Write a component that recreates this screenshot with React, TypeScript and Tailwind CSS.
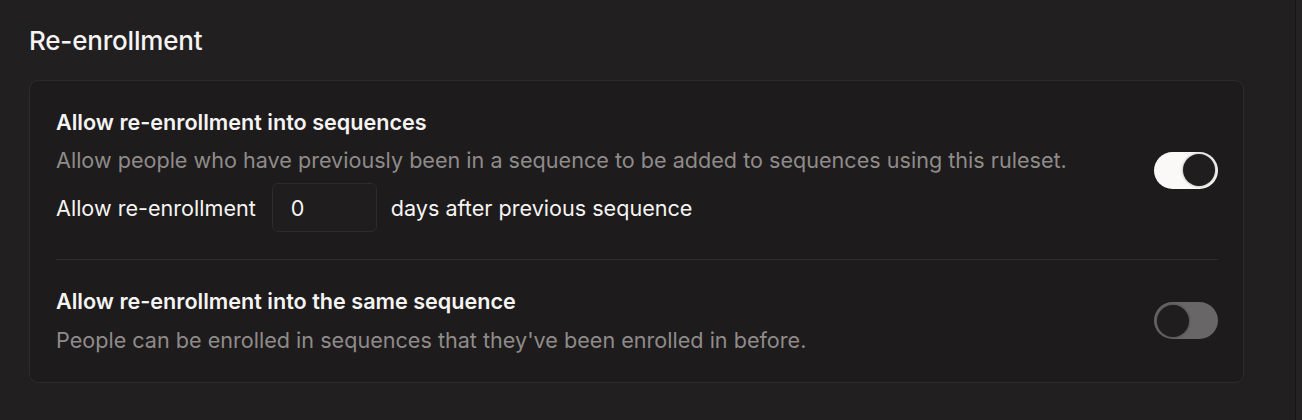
import React, { useState } from "react";

function Toggle({ on, onChange }: { on: boolean; onChange: () => void }) {
  return (
    <button
      type="button"
      role="switch"
      aria-checked={on}
      onClick={onChange}
      className={
        "relative flex h-[37px] w-[64px] shrink-0 items-center rounded-full px-[3px] " +
        (on ? "justify-end bg-[#faf9f7]" : "justify-start bg-[#686666]")
      }
    >
      <span className="block h-[32px] w-[32px] rounded-full bg-[#1f1d1e] shadow-[0_0_3px_rgba(0,0,0,0.4)]" />
    </button>
  );
}

export default function App() {
  const [reenroll, setReenroll] = useState(true);
  const [same, setSame] = useState(false);
  const [days, setDays] = useState("0");

  return (
    <div
      className="flex h-[420px] w-full bg-[#211f20] text-[#f6f4f3]"
      style={{ fontFamily: "Inter, 'Noto Sans', sans-serif" }}
    >
      <div className="flex-1 pl-[29px] pr-[51px] pt-[25px]">
        <h2 className="text-[26px] leading-[32px] font-medium tracking-[-0.2px]">Re-enrollment</h2>

        <div className="mt-[23px] rounded-[9px] border border-[#2d2b2c] bg-[#1d1b1c] pl-[26px] pr-[25px] pt-[27px] pb-[28px]">
          <div className="flex items-center gap-6">
            <div className="flex-1">
              <div className="text-[21.6px] leading-[28px] font-semibold">Allow re-enrollment into sequences</div>
              <div className="mt-[10px] text-[21.6px] leading-[28px] text-[#8f8b8a]">
                Allow people who have previously been in a sequence to be added to sequences using this ruleset.
              </div>
              <div className="mt-[9px] flex items-center text-[21.6px] leading-[28px]">
                <span>Allow re-enrollment</span>
                <input
                  value={days}
                  onChange={(e) => setDays(e.target.value)}
                  className="ml-[16px] mr-[14px] h-[49px] w-[105px] rounded-[6px] border border-[#2d2b2c] bg-[#1f1d1e] px-[18px] text-[21.6px] text-[#f6f4f3] outline-none"
                />
                <span>days after previous sequence</span>
              </div>
            </div>
            <Toggle on={reenroll} onChange={() => setReenroll(!reenroll)} />
          </div>

          <div className="mt-[27px] h-px bg-[#2f2d2e]" />

          <div className="mt-[27px] flex items-center gap-6">
            <div className="flex-1">
              <div className="text-[21.6px] leading-[28px] font-semibold">Allow re-enrollment into the same sequence</div>
              <div className="mt-[11px] text-[21.6px] leading-[28px] text-[#8f8b8a]">
                People can be enrolled in sequences that they've been enrolled in before.
              </div>
            </div>
            <Toggle on={same} onChange={() => setSame(!same)} />
          </div>
        </div>
      </div>
      <div className="w-[7px] border-l border-[#171516] bg-[#242223]" />
    </div>
  );
}
